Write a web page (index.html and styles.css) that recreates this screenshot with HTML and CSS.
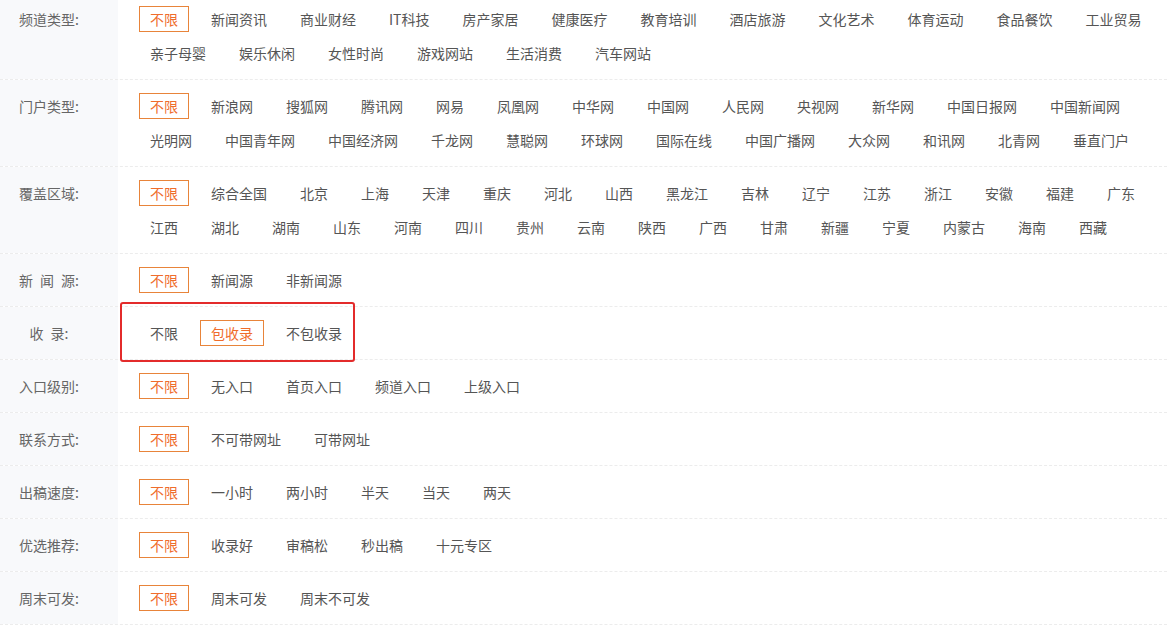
FILE: index.html
```html
<!DOCTYPE html>
<html lang="zh-CN">

<head>
    <meta charset="UTF-8">
    <meta name="viewport" content="width=device-width, initial-scale=1.0">
    <title>媒体筛选</title>
    <link rel="stylesheet" href="styles.css">
</head>

<body>

    <div class="filter">
        <div class="row">
            <div class="label">频道类型:</div>
            <div class="opts">
                <a class="opt on">不限</a>
                <a class="opt">新闻资讯</a>
                <a class="opt">商业财经</a>
                <a class="opt">IT科技</a>
                <a class="opt">房产家居</a>
                <a class="opt">健康医疗</a>
                <a class="opt">教育培训</a>
                <a class="opt">酒店旅游</a>
                <a class="opt">文化艺术</a>
                <a class="opt">体育运动</a>
                <a class="opt">食品餐饮</a>
                <a class="opt">工业贸易</a>
                <a class="opt">亲子母婴</a>
                <a class="opt">娱乐休闲</a>
                <a class="opt">女性时尚</a>
                <a class="opt">游戏网站</a>
                <a class="opt">生活消费</a>
                <a class="opt">汽车网站</a>
            </div>
        </div>
        <div class="row">
            <div class="label">门户类型:</div>
            <div class="opts">
                <a class="opt on">不限</a>
                <a class="opt">新浪网</a>
                <a class="opt">搜狐网</a>
                <a class="opt">腾讯网</a>
                <a class="opt">网易</a>
                <a class="opt">凤凰网</a>
                <a class="opt">中华网</a>
                <a class="opt">中国网</a>
                <a class="opt">人民网</a>
                <a class="opt">央视网</a>
                <a class="opt">新华网</a>
                <a class="opt">中国日报网</a>
                <a class="opt">中国新闻网</a>
                <a class="opt">光明网</a>
                <a class="opt">中国青年网</a>
                <a class="opt">中国经济网</a>
                <a class="opt">千龙网</a>
                <a class="opt">慧聪网</a>
                <a class="opt">环球网</a>
                <a class="opt">国际在线</a>
                <a class="opt">中国广播网</a>
                <a class="opt">大众网</a>
                <a class="opt">和讯网</a>
                <a class="opt">北青网</a>
                <a class="opt">垂直门户</a>
            </div>
        </div>
        <div class="row">
            <div class="label">覆盖区域:</div>
            <div class="opts">
                <a class="opt on">不限</a>
                <a class="opt">综合全国</a>
                <a class="opt">北京</a>
                <a class="opt">上海</a>
                <a class="opt">天津</a>
                <a class="opt">重庆</a>
                <a class="opt">河北</a>
                <a class="opt">山西</a>
                <a class="opt">黑龙江</a>
                <a class="opt">吉林</a>
                <a class="opt">辽宁</a>
                <a class="opt">江苏</a>
                <a class="opt">浙江</a>
                <a class="opt">安徽</a>
                <a class="opt">福建</a>
                <a class="opt">广东</a>
                <a class="opt">江西</a>
                <a class="opt">湖北</a>
                <a class="opt">湖南</a>
                <a class="opt">山东</a>
                <a class="opt">河南</a>
                <a class="opt">四川</a>
                <a class="opt">贵州</a>
                <a class="opt">云南</a>
                <a class="opt">陕西</a>
                <a class="opt">广西</a>
                <a class="opt">甘肃</a>
                <a class="opt">新疆</a>
                <a class="opt">宁夏</a>
                <a class="opt">内蒙古</a>
                <a class="opt">海南</a>
                <a class="opt">西藏</a>
            </div>
        </div>
        <div class="row">
            <div class="label">新&ensp;闻&ensp;源:</div>
            <div class="opts">
                <a class="opt on">不限</a>
                <a class="opt">新闻源</a>
                <a class="opt">非新闻源</a>
            </div>
        </div>
        <div class="row">
            <div class="label">收&ensp;录:</div>
            <div class="opts">
                <a class="opt">不限</a>
                <a class="opt on">包收录</a>
                <a class="opt">不包收录</a>
            </div>
            <!-- 标注框 -->
            <span class="mark"></span>
        </div>
        <div class="row">
            <div class="label">入口级别:</div>
            <div class="opts">
                <a class="opt on">不限</a>
                <a class="opt">无入口</a>
                <a class="opt">首页入口</a>
                <a class="opt">频道入口</a>
                <a class="opt">上级入口</a>
            </div>
        </div>
        <div class="row">
            <div class="label">联系方式:</div>
            <div class="opts">
                <a class="opt on">不限</a>
                <a class="opt">不可带网址</a>
                <a class="opt">可带网址</a>
            </div>
        </div>
        <div class="row">
            <div class="label">出稿速度:</div>
            <div class="opts">
                <a class="opt on">不限</a>
                <a class="opt">一小时</a>
                <a class="opt">两小时</a>
                <a class="opt">半天</a>
                <a class="opt">当天</a>
                <a class="opt">两天</a>
            </div>
        </div>
        <div class="row">
            <div class="label">优选推荐:</div>
            <div class="opts">
                <a class="opt on">不限</a>
                <a class="opt">收录好</a>
                <a class="opt">审稿松</a>
                <a class="opt">秒出稿</a>
                <a class="opt">十元专区</a>
            </div>
        </div>
        <div class="row">
            <div class="label">周末可发:</div>
            <div class="opts">
                <a class="opt on">不限</a>
                <a class="opt">周末可发</a>
                <a class="opt">周末不可发</a>
            </div>
        </div>
    </div>

</body>

</html>
```

FILE: styles.css
```css
body {
    margin: 0;
    font-family: "Microsoft YaHei", "Noto Sans CJK SC", sans-serif;
    font-size: 14px;
    background-color: #fff;
}

.filter {
    margin-top: -7px;
}

.row {
    position: relative;
    display: flex;
    border-bottom: 1px dashed #ececec;
}

.label {
    flex-shrink: 0;
    width: 118px;
    box-sizing: border-box;
    padding: 13px 20px 0 0;
    background-color: #f8f9fb;
    color: #666;
    line-height: 26px;
    text-align: center;
}

.opts {
    flex: 1;
    display: flex;
    flex-wrap: wrap;
    gap: 8px 11px;
    padding: 13px 0 13px 21px;
}

.opt {
    padding: 0 10px;
    border: 1px solid transparent;
    line-height: 24px;
    color: #555;
    cursor: pointer;
}

.opt:hover {
    color: #ef6d2c;
}

.opt.on {
    border-color: #e8843a;
    color: #ef6d2c;
}

.mark {
    position: absolute;
    left: 120px;
    top: -5px;
    width: 235px;
    height: 60px;
    box-sizing: border-box;
    border: 2px solid #e32b2b;
    border-radius: 3px;
    pointer-events: none;
}
```
